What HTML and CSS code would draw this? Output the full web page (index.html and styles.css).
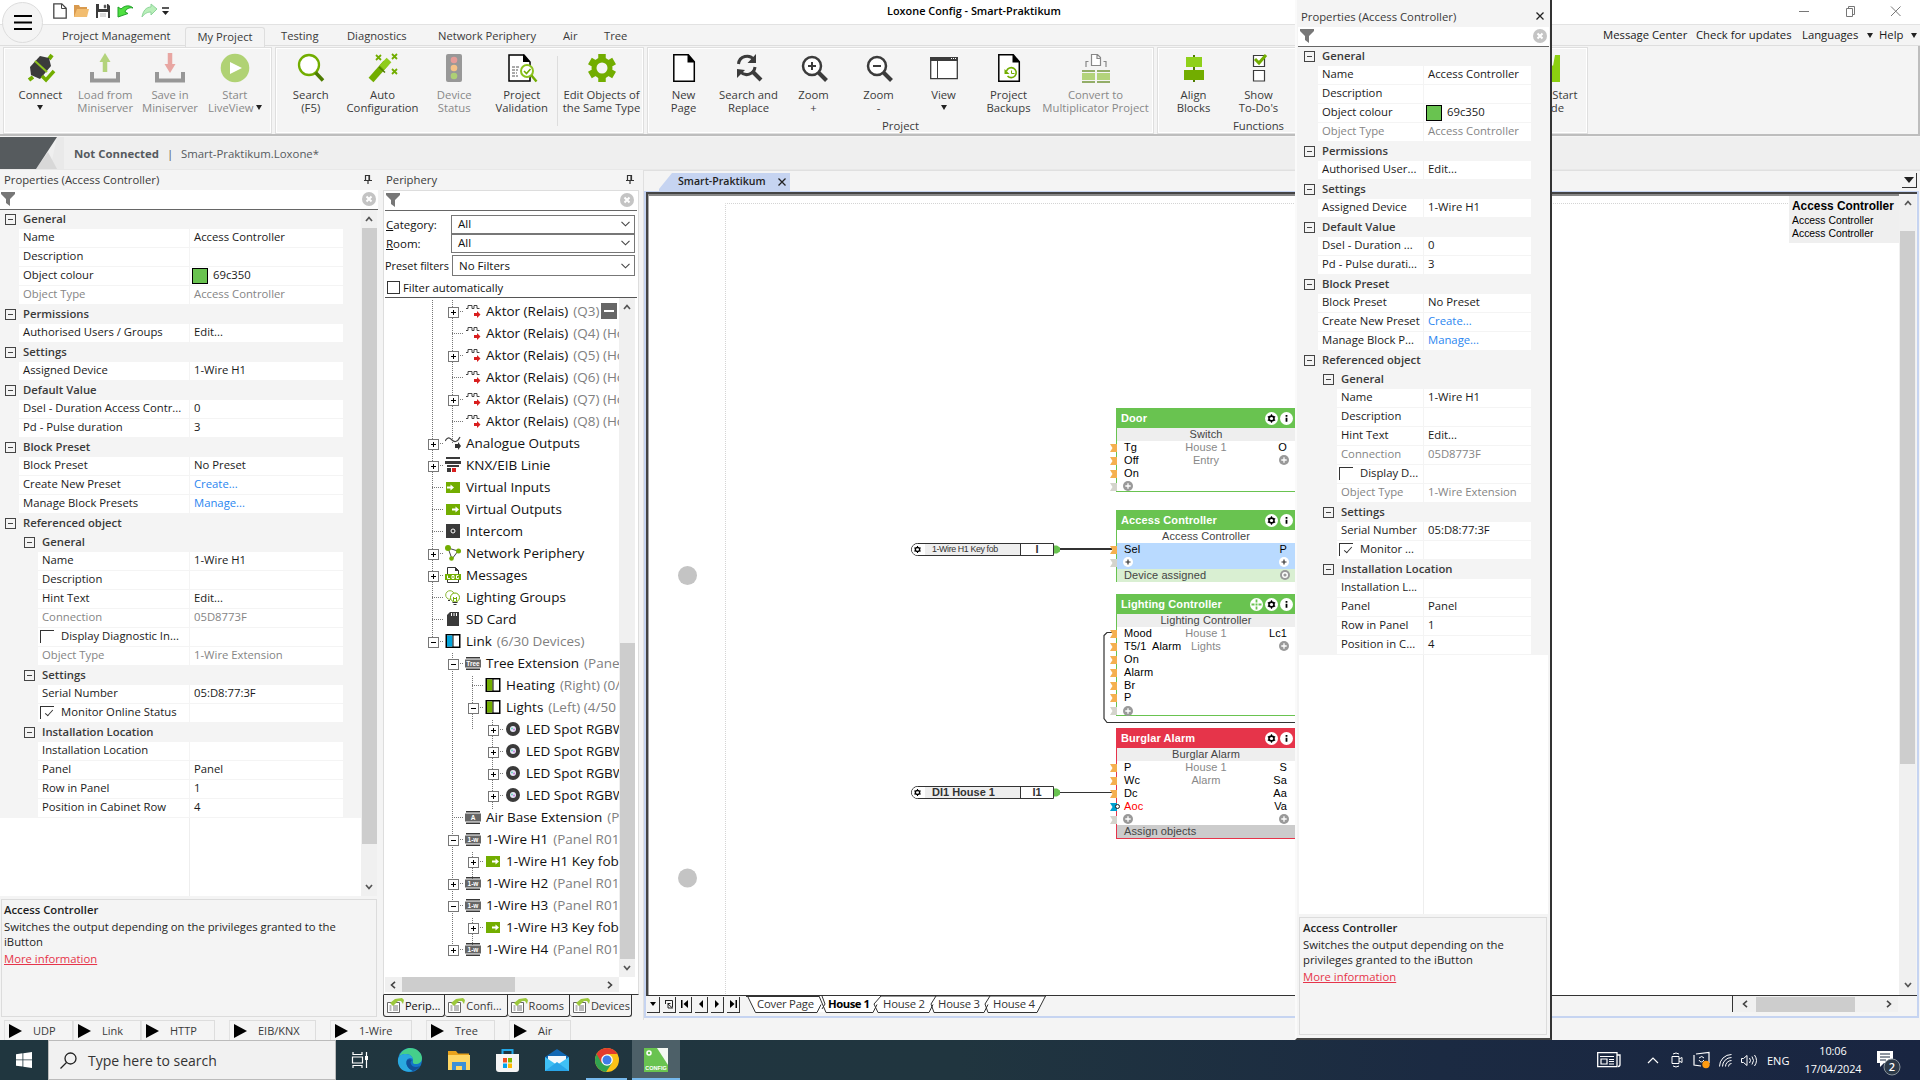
FILE: index.html
```html
<!DOCTYPE html>
<html lang="en">
<head>
<meta charset="utf-8">
<title>Loxone Config - Smart-Praktikum</title>
<link rel="stylesheet" href="styles.css">
</head>
<body>
<svg class="sprite" width="0" height="0">
  <symbol id="funnel" viewBox="0 0 14 14"><path d="M0 0h14v2L9 7v7L5 11V7L0 2z" fill="#777"/></symbol>
  <symbol id="clear" viewBox="0 0 14 14"><circle cx="7" cy="7" r="7" fill="#c4c4c4"/><path d="M4.5 4.5l5 5M9.5 4.5l-5 5" stroke="#fff" stroke-width="2"/></symbol>
  <symbol id="pin" viewBox="0 0 8 9"><path d="M1.5 5V.5h4V5M5 .5V5M0 5.5h8M4 6v3" fill="none" stroke="#333" stroke-width="1.2"/></symbol>
  <symbol id="up" viewBox="0 0 8 6"><path d="M1 5l3-3.5L7 5" fill="none" stroke="#555" stroke-width="1.7"/></symbol>
  <symbol id="down" viewBox="0 0 8 6"><path d="M1 1l3 3.5L7 1" fill="none" stroke="#555" stroke-width="1.7"/></symbol>
  <symbol id="left" viewBox="0 0 6 8"><path d="M5 .8L1.5 4 5 7.2" fill="none" stroke="#444" stroke-width="1.6"/></symbol>
  <symbol id="right" viewBox="0 0 6 8"><path d="M1 .8L4.500 4 1 7.200" fill="none" stroke="#444" stroke-width="1.6"/></symbol>
  <symbol id="chev" viewBox="0 0 9 6"><path d="M.5 .8l4 4 4-4" fill="none" stroke="#444" stroke-width="1.100"/></symbol>
  <symbol id="relay" viewBox="0 0 16 14"><path d="M1 4.500h2V1.500h4v3h2V1.500h3v3h2.500" fill="none" stroke="#444"/><path d="M9 9h3V7l3.500 3.500L12 14v-2H9z" fill="#d91e1e"/></symbol>
  <symbol id="analog" viewBox="0 0 16 14"><path d="M0 5c3-5 5-3 7-1s5 3 8-3" fill="none" stroke="#444" stroke-width="1.200"/><path d="M10 8h3V6l3 4-3 4v-2h-3z" fill="#333"/></symbol>
  <symbol id="knx" viewBox="0 0 16 16"><path d="M1 0h14v2H1zM0 4h16v3H0zM2 8h12v2H2zM2 11h4v4H2z" fill="#3a3a3a"/><path d="M7 11h4v4H7z" fill="#d91e1e"/></symbol>
  <symbol id="vin" viewBox="0 0 14 11"><path d="M0 0h14v11H0z" fill="#72ad00"/><path d="M1 4.500h3.500V2.500l3.500 3-3.500 3v-2H1z" fill="#fff"/></symbol>
  <symbol id="vout" viewBox="0 0 14 11"><path d="M0 0h14v11H0z" fill="#72ad00"/><path d="M6 4.500h3.500V2.500l3.500 3-3.500 3v-2H6z" fill="#fff"/></symbol>
  <symbol id="intercom" viewBox="0 0 14 14"><path d="M0 0h14v14H0z" fill="#3a3a3a"/><circle cx="7" cy="7" r="2" fill="none" stroke="#fff"/></symbol>
  <symbol id="network" viewBox="0 0 16 16"><path d="M3 3l10 3-6 8z" fill="none" stroke="#444"/><circle cx="3" cy="3" r="3" fill="#72ad00"/><circle cx="13.500" cy="6" r="2.500" fill="#72ad00"/><circle cx="6.500" cy="13.500" r="2.300" fill="#72ad00"/></symbol>
  <symbol id="log" viewBox="0 0 16 16"><path d="M2.500 15.500V.5h8l3 3v12z" fill="#fff" stroke="#333"/><path d="M10 0v4h4z" fill="#333"/><path d="M0 7h16v6H0z" fill="#72ad00"/><path d="M2.500 8.500v3h2.500M7 8.500h2v3H7zM13.500 8.500h-2v3h2v-1" fill="none" stroke="#fff"/></symbol>
  <symbol id="bulbs" viewBox="0 0 16 15"><circle cx="5" cy="5" r="4.300" fill="none" stroke="#8db83a"/><circle cx="10" cy="7.500" r="4.500" fill="#fff" stroke="#72ad00"/><path d="M8.500 11V7M11.500 11V7M8.500 8.500h3" stroke="#72ad00"/><path d="M7.500 12.500h5M8.500 14.500h3M3 10.500h2" stroke="#333"/></symbol>
  <symbol id="sd" viewBox="0 0 12 14"><path d="M3 0h9v14H0V3z" fill="#3a3a3a"/><path d="M4.500 1v3M7 1v3M9.500 1v3" stroke="#fff"/></symbol>
  <symbol id="linkbox" viewBox="0 0 15 14"><path d="M.75.75h13.500v12.500H.75z" fill="#fff" stroke="#000" stroke-width="1.500"/><path d="M1.500 1.500H7v11H1.500z" fill="#00a4db"/><path d="M7.500 1v12" stroke="#000"/></symbol>
  <symbol id="treebox" viewBox="0 0 15 14"><path d="M.75.75h13.500v12.500H.75z" fill="#fff" stroke="#000" stroke-width="1.500"/><path d="M1.500 1.500H7v11H1.500z" fill="#72ad00"/><path d="M7.500 1v12" stroke="#000"/></symbol>
  <symbol id="spot" viewBox="0 0 14 14"><circle cx="7" cy="7" r="7" fill="#3a3a3a"/><circle cx="7" cy="7" r="3" fill="#e6e6f4"/><circle cx="6" cy="6.500" r="1" fill="#6ad1c0"/><circle cx="8" cy="7.500" r="1" fill="#c67be0"/></symbol>
  <symbol id="ext" viewBox="0 0 16 13"><path d="M1 0h14v1.500H1zM1 11.500h14V13H1z" fill="#3a3a3a"/><path d="M0 2.500h16v8H0z" fill="#666"/></symbol>
  <symbol id="proptab" viewBox="0 0 17 15"><path d="M.5 4.500h12v10H.5z" fill="#fff" stroke="#666"/><path d="M2.500 8h2M6 8h5M2.500 10h2M6 10h5M2.500 12h2M6 12h5" stroke="#777"/><path d="M3 5l5-4 7-1 2 2-1 4-2-3-3 0-5 5z" fill="#9cc83c"/></symbol>
  <symbol id="gearw" viewBox="0 0 13 13"><circle cx="6.500" cy="6.500" r="6.500" fill="#fff"/><circle cx="6.500" cy="6.500" r="2.500" fill="none" stroke="#000" stroke-width="1.600"/><path d="M6.500 2.300v8.400M2.800 4.400l7.400 4.200M10.200 4.400L2.800 8.600" stroke="#000" stroke-width="1.200"/><circle cx="6.500" cy="6.500" r="1.600" fill="#fff"/></symbol>
  <symbol id="infow" viewBox="0 0 13 13"><circle cx="6.500" cy="6.500" r="6.500" fill="#fff"/><path d="M6.500 3v1.800M6.500 5.800v4" stroke="#000" stroke-width="1.800"/></symbol>
  <symbol id="movew" viewBox="0 0 13 13"><circle cx="6.500" cy="6.500" r="6.500" fill="#fff"/><path d="M6.500 1.500v3M6.500 8.500v3M1.500 6.500h3M8.500 6.500h3M5.500 6.500h2" stroke="#69c350" stroke-width="1.800"/></symbol>
  <symbol id="addg" viewBox="0 0 10 10"><circle cx="5" cy="5" r="5" fill="#999"/><path d="M5 2.300v5.400M2.300 5h5.400" stroke="#fff" stroke-width="1.300"/></symbol>
  <symbol id="addw" viewBox="0 0 10 10"><circle cx="5" cy="5" r="5" fill="#fff"/><path d="M5 2.500v5M2.500 5h5" stroke="#333" stroke-width="1.200"/></symbol>
  <symbol id="port" viewBox="0 0 7 8"><path d="M0 0h7v8H0l2.500-4z"/></symbol>
  <symbol id="play" viewBox="0 0 13 14"><path d="M0 0l13 7-13 7z"/></symbol>
</svg>

<header class="titlebar">
  <div class="quick">
    <svg width="14" height="16" viewBox="0 0 14 16"><path d="M.8.8h8l4.400 4.400v10H.8z" fill="#fff" stroke="#444" stroke-width="1.300"/><path d="M8.500 1v4.500H13" fill="none" stroke="#444"/></svg>
    <svg width="15" height="12" viewBox="0 0 15 12"><path d="M0 0h5l1 2h7v10H0z" fill="#d99a4e"/><path d="M3 4h12l-2 8H0z" fill="#f2bd70"/></svg>
    <svg width="14" height="14" viewBox="0 0 14 14"><path d="M0 0h12l2 2v12H0z" fill="#3b3b3b"/><path d="M3 0h8v5H3zM2 8h10v6H2z" fill="#fff"/><path d="M8 1h2v3H8zM4 10h6M4 12h6" fill="#3b3b3b" stroke="#888" stroke-width=".6"/></svg>
    <svg width="17" height="14" viewBox="0 0 17 14"><path d="M1 3l3 2c4-4 9-4 12-1-4-1-7 1-8 4l3 1.500L1 13z" fill="#4fe040" stroke="#22a02a"/></svg>
    <svg width="17" height="14" viewBox="0 0 17 14"><path d="M16 5L10 0v3C5 3 2 7 1 13c3-4 6-5 9-5v3z" fill="#b9efb9" stroke="#8fd49b"/></svg>
    <svg width="7" height="8" viewBox="0 0 7 8"><path d="M0 1h7" stroke="#222" stroke-width="1.500"/><path d="M0 4h7L3.500 8z" fill="#222"/></svg>
  </div>
  <div class="win-title">Loxone Config - Smart-Praktikum</div>
  <svg class="win-ctl" width="104" height="12" viewBox="0 0 104 12"><path d="M0 6.500h10M47.500 3.500h6v8h-6zM49.500 3.500v-2h6v8h-2M92 1.500l9.500 9.500M101.500 1.500L92 11" fill="none" stroke="#777"/></svg>
</header>

<nav class="tabs">
  <span class="tab t-pm">Project Management</span>
  <span class="tab active">My Project</span>
  <span class="tab t-te">Testing</span>
  <span class="tab t-di">Diagnostics</span>
  <span class="tab t-ne">Network Periphery</span>
  <span class="tab t-ai">Air</span>
  <span class="tab t-tr">Tree</span>
  <div class="tab-right"><span class="mc">Message Center</span><span class="cu">Check for updates</span><span class="la">Languages</span><i class="tri"></i><span class="he">Help</span><i class="tri"></i></div>
</nav>
<div class="menu-orb"><svg width="18" height="16" viewBox="0 0 18 16"><path d="M0 2h18M0 8.500h18M0 15h18" stroke="#000" stroke-width="2"/></svg></div>

<section class="ribbon">
  <div class="group g1">
    <div class="btn"><svg width="30" height="30" viewBox="0 0 30 30"><path d="M27 2l-3 4M4 27l4-3" stroke="#72ad00" stroke-width="4"/><path d="M15 3l9 2 2 8-11 13-9-4-1-8z" fill="#3b3b3b"/><path d="M10 8l12 11" stroke="#8fc320" stroke-width="2"/><path d="M17 23l4 4 8-9" fill="none" stroke="#72ad00" stroke-width="3.500"/></svg><span>Connect</span><i class="tri"></i></div>
    <div class="btn off"><svg width="30" height="30" viewBox="0 0 30 30"><path d="M2 19v8.500h26V19" fill="none" stroke="#979797" stroke-width="4"/><path d="M15 19V8" stroke="#b3d37b" stroke-width="4.500"/><path d="M9.500 9L15 0l5.500 9z" fill="#b3d37b"/></svg><span>Load from</span><span>Miniserver</span></div>
    <div class="btn off"><svg width="30" height="30" viewBox="0 0 30 30"><path d="M2 19v8.500h26V19" fill="none" stroke="#979797" stroke-width="4"/><path d="M15 0v12" stroke="#e8a6a2" stroke-width="4.500"/><path d="M9.500 11l5.500 9 5.500-9z" fill="#e8a6a2"/></svg><span>Save in</span><span>Miniserver</span></div>
    <div class="btn off"><svg width="30" height="30" viewBox="0 0 30 30"><circle cx="15" cy="15" r="14.300" fill="#b0d274"/><path d="M10 9l12 6-12 6z" fill="#fff"/></svg><span>Start</span><span>LiveView<i class="tri"></i></span></div>
  </div>
  <div class="group g2">
    <div class="btn"><svg width="30" height="30" viewBox="0 0 30 30"><circle cx="13" cy="12" r="10" fill="#fff" stroke="#72ad00" stroke-width="2.300"/><path d="M19.500 19.500l7.500 8" stroke="#4e7c00" stroke-width="3.500"/></svg><span>Search</span><span>(F5)</span></div>
    <div class="btn b72"><svg width="30" height="30" viewBox="0 0 30 30"><path d="M3 27L18 10" stroke="#72ad00" stroke-width="6.500"/><path d="M14 14.500L21 7" stroke="#8fcc1c" stroke-width="6.500"/><path d="M11 14l6 5.500" stroke="#4e7c00" stroke-width="1.500"/><path d="M8 2l5 5M13 2L8 7M24 1l5 5M29 1l-5 5M24 16l5 5M29 16l-5 5" stroke="#72ad00" stroke-width="1.800"/></svg><span>Auto</span><span>Configuration</span></div>
    <div class="btn off"><svg width="30" height="30" viewBox="0 0 30 30"><rect x="7" y="1" width="16" height="28" rx="2" fill="#989898"/><circle cx="15" cy="7" r="3.300" fill="#e59c98"/><circle cx="15" cy="15" r="3.300" fill="#f5c288"/><circle cx="15" cy="23" r="3.300" fill="#aed075"/></svg><span>Device</span><span>Status</span></div>
    <div class="btn"><svg width="30" height="30" viewBox="0 0 30 30"><path d="M2 2h15l6 7v19H2z" fill="#fff" stroke="#000" stroke-width="1.500"/><path d="M16 1v8h7z"/><path d="M5 14h8M5 17h6M5 20h5M5 23h6" stroke="#555" stroke-dasharray="3 1"/><circle cx="20" cy="18" r="6" fill="#fff" stroke="#8cc21e" stroke-width="2"/><path d="M17 18l2.500 2.500 4-4.500" fill="none" stroke="#72ad00" stroke-width="1.600"/><path d="M24.500 22.500l5 6" stroke="#72ad00" stroke-width="2.500"/></svg><span>Project</span><span>Validation</span></div>
    <i class="vsep"></i>
    <div class="btn b80"><svg width="30" height="30" viewBox="0 0 30 30"><path d="M15 1v28M2.900 8l24.200 14M27.100 8L2.900 22" stroke="#72ad00" stroke-width="7.500"/><circle cx="15" cy="15" r="10.500" fill="#72ad00"/><circle cx="15" cy="15" r="5.500" fill="#f4f4f4"/></svg><span>Edit Objects of</span><span>the Same Type</span></div>
  </div>
  <div class="group g3">
    <div class="btn"><svg width="30" height="30" viewBox="0 0 30 30"><path d="M4.800 1.800h14.500l6 7v19.500H4.800z" fill="#fff" stroke="#000" stroke-width="1.500"/><path d="M18.500 1v8.500H26z"/></svg><span>New</span><span>Page</span></div>
    <div class="btn"><svg width="30" height="30" viewBox="0 0 30 30"><path d="M4.500 11A8.500 8.500 0 0 1 20 7M21 14a8.500 8.500 0 0 1-14.500 5" fill="none" stroke="#3b3b3b" stroke-width="3"/><path d="M22 1v9h-8.500zM3 25v-9l8 1z" fill="#3b3b3b"/><path d="M18 18l9 9" stroke="#3b3b3b" stroke-width="4"/></svg><span>Search and</span><span>Replace</span></div>
    <div class="btn"><svg width="30" height="30" viewBox="0 0 30 30"><circle cx="13" cy="13" r="9" fill="#fff" stroke="#3b3b3b" stroke-width="2.500"/><path d="M19.500 19.500l8 8" stroke="#3b3b3b" stroke-width="4"/><path d="M13 9v8M9 13h8" stroke="#3b3b3b" stroke-width="2"/></svg><span>Zoom</span><span>+</span></div>
    <div class="btn"><svg width="30" height="30" viewBox="0 0 30 30"><circle cx="13" cy="13" r="9" fill="#fff" stroke="#3b3b3b" stroke-width="2.500"/><path d="M19.500 19.500l8 8" stroke="#3b3b3b" stroke-width="4"/><path d="M9 13h8" stroke="#3b3b3b" stroke-width="2"/></svg><span>Zoom</span><span>-</span></div>
    <div class="btn"><svg width="30" height="30" viewBox="0 0 30 30"><path d="M1.700 4.700h26.600v21H1.700z" fill="#fff" stroke="#3b3b3b" stroke-width="1.300"/><path d="M1 4h28v4H1z" fill="#3b3b3b"/><path d="M8.500 8v18" stroke="#3b3b3b"/><path d="M22 5.500h6" stroke="#fff" stroke-dasharray="1 1"/></svg><span>View</span><i class="tri"></i></div>
    <div class="btn"><svg width="30" height="30" viewBox="0 0 30 30"><path d="M4.800 1.800h14.500l6 7v19.500H4.800z" fill="#fff" stroke="#000" stroke-width="1.500"/><path d="M18.500 1v8.500H26z"/><path d="M12.500 18a5 5 0 1 1 1 5" fill="none" stroke="#72ad00" stroke-width="1.600"/><path d="M10.500 16v5h5z" fill="#72ad00"/><path d="M17.500 17.500v3h3" fill="none" stroke="#72ad00"/></svg><span>Project</span><span>Backups</span></div>
    <div class="btn b108 off"><svg width="30" height="30" viewBox="0 0 30 30"><path d="M10.500 1.500h6l3 3v8h-9zM16 1.500v4h4" fill="#fff" stroke="#888" stroke-width="1.200"/><path d="M5 14V8.500h2.500M25 14V8.500h-2.500" fill="none" stroke="#888" stroke-width="1.200"/><path d="M1 17h13v2H1zM16 17h13v2H16zM1 28h13v2H1zM16 28h13v2H16z" fill="#93ad68"/><path d="M1 20h13v7H1zM16 20h13v7H16z" fill="#b3d37b"/></svg><span>Convert to</span><span>Multiplicator Project</span></div>
    <div class="caption">Project</div>
  </div>
  <div class="group g4">
    <div class="btn"><svg width="30" height="30" viewBox="0 0 30 30"><path d="M15 2v27" stroke="#4e7c00" stroke-width="2"/><path d="M7 4h16v10H7z" fill="#8fd01a"/><path d="M5 17h20v10H5z" fill="#72ad00"/></svg><span>Align</span><span>Blocks</span></div>
    <div class="btn"><svg width="30" height="30" viewBox="0 0 30 30"><path d="M9.500 2.500h11v11h-11zM9.500 17.500h11v10.500h-11z" fill="#fff" stroke="#3b3b3b" stroke-width="1.200"/><path d="M11 6l4 4 7-8" fill="none" stroke="#72ad00" stroke-width="3"/></svg><span>Show</span><span>To-Do's</span></div>
    <div class="btn quickstart"><svg width="30" height="30" viewBox="0 0 30 30"><path d="M6 12h6l4-2 3 3 2-11h5v27H6z" fill="#8cd010"/></svg><span>Quick Start</span><span>Guide</span></div>
    <div class="caption cap4">Functions</div>
  </div>
</section>

<div class="conn">
  <svg width="64" height="32" viewBox="0 0 64 32"><path d="M57 0h7v32H50z" fill="#e9e9e9"/><path d="M48 15l9 17H36z" fill="#d8d8d8"/><path d="M0 0h57L36 32H0z" fill="#565b5e"/></svg>
  <b>Not Connected</b><span class="bar">|</span><span>Smart-Praktikum.Loxone*</span>
</div>

<main class="work">
  <aside class="props docked">
    <div class="cap"><span>Properties (Access Controller)</span><svg width="8" height="9"><use href="#pin"/></svg></div>
    <div class="filter"><svg width="14" height="14"><use href="#funnel"/></svg><svg width="14" height="14"><use href="#clear"/></svg></div>
    <div class="sheet">
      <div class="rows">
        <div class="ph">General</div>
        <div class="pr"><span>Name</span><span>Access Controller</span></div>
        <div class="pr"><span>Description</span><span></span></div>
        <div class="pr"><span>Object colour</span><span><i class="swatch"></i>69c350</span></div>
        <div class="pr dim"><span>Object Type</span><span>Access Controller</span></div>
        <div class="ph">Permissions</div>
        <div class="pr"><span>Authorised Users / Groups</span><span>Edit...</span></div>
        <div class="ph">Settings</div>
        <div class="pr"><span>Assigned Device</span><span>1-Wire H1</span></div>
        <div class="ph">Default Value</div>
        <div class="pr"><span>Dsel - Duration Access Contr...</span><span>0</span></div>
        <div class="pr"><span>Pd - Pulse duration</span><span>3</span></div>
        <div class="ph">Block Preset</div>
        <div class="pr"><span>Block Preset</span><span>No Preset</span></div>
        <div class="pr link"><span>Create New Preset</span><span>Create...</span></div>
        <div class="pr link"><span>Manage Block Presets</span><span>Manage...</span></div>
        <div class="ph">Referenced object</div>
        <div class="nest">
          <div class="ph">General</div>
          <div class="pr"><span>Name</span><span>1-Wire H1</span></div>
          <div class="pr"><span>Description</span><span></span></div>
          <div class="pr"><span>Hint Text</span><span>Edit...</span></div>
          <div class="pr dim"><span>Connection</span><span>05D8773F</span></div>
          <div class="pr chk"><span><i class="box"></i>Display Diagnostic In...</span><span></span></div>
          <div class="pr dim"><span>Object Type</span><span>1-Wire Extension</span></div>
          <div class="ph">Settings</div>
          <div class="pr"><span>Serial Number</span><span>05:D8:77:3F</span></div>
          <div class="pr chk"><span><i class="box on"></i>Monitor Online Status</span><span></span></div>
          <div class="ph">Installation Location</div>
          <div class="pr"><span>Installation Location</span><span></span></div>
          <div class="pr"><span>Panel</span><span>Panel</span></div>
          <div class="pr"><span>Row in Panel</span><span>1</span></div>
          <div class="pr"><span>Position in Cabinet Row</span><span>4</span></div>
        </div>
        <div class="blank"></div>
      </div>
      <div class="vscroll"><svg width="8" height="6"><use href="#up"/></svg><i class="thumb"></i><svg width="8" height="6"><use href="#down"/></svg></div>
    </div>
    <div class="desc"><b>Access Controller</b><p>Switches the output depending on the privileges granted to the iButton</p><a>More information</a></div>
  </aside>

  <aside class="peri">
    <div class="cap"><span>Periphery</span><svg width="8" height="9"><use href="#pin"/></svg></div>
    <div class="peri-box">
      <div class="filter"><svg width="14" height="14"><use href="#funnel"/></svg><svg width="14" height="14"><use href="#clear"/></svg></div>
      <div class="form">
        <div class="fr"><label><u>C</u>ategory:</label><div class="sel">All<svg width="9" height="6"><use href="#chev"/></svg></div></div>
        <div class="fr"><label><u>R</u>oom:</label><div class="sel">All<svg width="9" height="6"><use href="#chev"/></svg></div></div>
        <div class="fr preset"><label>Preset filters</label><div class="sel">No Filters<svg width="9" height="6"><use href="#chev"/></svg></div></div>
        <div class="fr auto"><i class="cb"></i>Filter automatically</div>
      </div>
      <div class="tree-wrap">
        <div class="tree">
          <svg class="lines" width="120" height="660"><path d="M47.500 0v344M67.500 0v144M67.500 353v300M87.500 376v54M87.500 552v28M87.500 618v28M107.500 420v90" /></svg>
          <div class="n l2 p"><svg width="16" height="14"><use href="#relay"/></svg>Aktor (Relais)<em>(Q3)</em><i class="minus"></i></div>
          <div class="n l2"><svg width="16" height="14"><use href="#relay"/></svg>Aktor (Relais)<em>(Q4) (House 1)</em></div>
          <div class="n l2 p"><svg width="16" height="14"><use href="#relay"/></svg>Aktor (Relais)<em>(Q5) (House 1)</em></div>
          <div class="n l2"><svg width="16" height="14"><use href="#relay"/></svg>Aktor (Relais)<em>(Q6) (House 1)</em></div>
          <div class="n l2 p"><svg width="16" height="14"><use href="#relay"/></svg>Aktor (Relais)<em>(Q7) (House 1)</em></div>
          <div class="n l2"><svg width="16" height="14"><use href="#relay"/></svg>Aktor (Relais)<em>(Q8) (House 1)</em></div>
          <div class="n l1 p"><svg width="16" height="14"><use href="#analog"/></svg>Analogue Outputs</div>
          <div class="n l1 p"><svg width="16" height="16"><use href="#knx"/></svg>KNX/EIB Linie</div>
          <div class="n l1"><svg width="16" height="11"><use href="#vin"/></svg>Virtual Inputs</div>
          <div class="n l1"><svg width="16" height="11"><use href="#vout"/></svg>Virtual Outputs</div>
          <div class="n l1"><svg width="16" height="14"><use href="#intercom"/></svg>Intercom</div>
          <div class="n l1 p"><svg width="16" height="16"><use href="#network"/></svg>Network Periphery</div>
          <div class="n l1 p"><svg width="16" height="16"><use href="#log"/></svg>Messages</div>
          <div class="n l1"><svg width="16" height="15"><use href="#bulbs"/></svg>Lighting Groups</div>
          <div class="n l1"><svg width="16" height="14"><use href="#sd"/></svg>SD Card</div>
          <div class="n l1 m"><svg width="16" height="14"><use href="#linkbox"/></svg>Link<em>(6/30 Devices)</em></div>
          <div class="n l2 m"><svg width="16" height="13"><use href="#ext"/><text x="8" y="9">Tree</text></svg>Tree Extension<em>(Panel R01)</em></div>
          <div class="n l3"><svg width="16" height="14"><use href="#treebox"/></svg>Heating<em>(Right) (0/50)</em></div>
          <div class="n l3 m"><svg width="16" height="14"><use href="#treebox"/></svg>Lights<em>(Left) (4/50</em></div>
          <div class="n l4 p"><svg width="16" height="14"><use href="#spot"/></svg>LED Spot RGBW</div>
          <div class="n l4 p"><svg width="16" height="14"><use href="#spot"/></svg>LED Spot RGBW</div>
          <div class="n l4 p"><svg width="16" height="14"><use href="#spot"/></svg>LED Spot RGBW</div>
          <div class="n l4 p"><svg width="16" height="14"><use href="#spot"/></svg>LED Spot RGBW</div>
          <div class="n l2"><svg width="16" height="13"><use href="#ext"/><text x="8" y="9">A</text></svg>Air Base Extension<em>(Panel)</em></div>
          <div class="n l2 m"><svg width="16" height="13"><use href="#ext"/><text x="8" y="9">1-w</text></svg>1-Wire H1<em>(Panel R01</em></div>
          <div class="n l3 p"><svg width="16" height="11"><use href="#vout"/></svg>1-Wire H1 Key fob</div>
          <div class="n l2 p"><svg width="16" height="13"><use href="#ext"/><text x="8" y="9">1-w</text></svg>1-Wire H2<em>(Panel R01</em></div>
          <div class="n l2 m"><svg width="16" height="13"><use href="#ext"/><text x="8" y="9">1-w</text></svg>1-Wire H3<em>(Panel R01</em></div>
          <div class="n l3 p"><svg width="16" height="11"><use href="#vout"/></svg>1-Wire H3 Key fob</div>
          <div class="n l2 p"><svg width="16" height="13"><use href="#ext"/><text x="8" y="9">1-w</text></svg>1-Wire H4<em>(Panel R01</em></div>
        </div>
        <div class="vscroll tv"><svg width="8" height="6"><use href="#up"/></svg><i class="thumb"></i><svg width="8" height="6"><use href="#down"/></svg></div>
      </div>
      <div class="hscroll"><svg width="6" height="8"><use href="#left"/></svg><i class="thumb"></i><svg width="6" height="8"><use href="#right"/></svg></div>
    </div>
    <div class="ptabs">
      <span class="on"><svg width="17" height="15"><use href="#proptab"/></svg>Perip...</span>
      <span><svg width="17" height="15"><use href="#proptab"/></svg>Confi...</span>
      <span><svg width="17" height="15"><use href="#proptab"/></svg>Rooms</span>
      <span><svg width="17" height="15"><use href="#proptab"/></svg>Devices</span>
    </div>
  </aside>

  <section class="doc">
    <div class="doctabs">
      <div class="doctab">Smart-Praktikum<svg width="8" height="8" viewBox="0 0 8 8"><path d="M.5.5l7 7M7.500.5l-7 7" stroke="#222" stroke-width="1.300"/></svg></div>
      <div class="dd"><i class="tri big"></i></div>
    </div>
    <div class="frame">
      <div class="canvas-row">
        <div class="canvas">
          <svg class="wires" width="1250" height="798">
            <path d="M76.500 798V7.500h1180" fill="none" stroke="#d4d4d4" stroke-dasharray="1 1"/>
            <circle cx="38.500" cy="379.500" r="9.500" fill="#c4c4c4"/><circle cx="38.500" cy="682" r="9.500" fill="#c4c4c4"/>
            <path d="M411 353h52" stroke="#333" stroke-width="2"/>
            <path d="M411 596.500h53" stroke="#333"/>
            <path d="M464 436.500h-6l-3 3v83l3 4h190" fill="none" stroke="#333" stroke-width="1.200"/>
            <g fill="#69c350"><path d="M405 349.500h3l3 2v4l-3 2h-3zM405 592.500h3l3 2v4l-3 2h-3z"/></g>
          </svg>
          <div class="pill p1"><svg width="13" height="11"><use href="#gearw" width="11" height="11"/></svg><span class="pn">1-Wire H1 Key fob</span><span class="pv">I</span></div>
          <div class="pill p2"><svg width="13" height="11"><use href="#gearw" width="11" height="11"/></svg><span class="pn big">DI1 House 1</span><span class="pv">I1</span></div>

          <div class="node door">
            <div class="nh">Door<span><svg width="13" height="13"><use href="#gearw"/></svg><svg width="13" height="13"><use href="#infow"/></svg></span></div>
            <div class="ns">Switch</div>
            <div class="np"><svg class="port"><use href="#port"/></svg><span>Tg</span><em>House 1</em><span>O</span></div>
            <div class="np"><svg class="port"><use href="#port"/></svg><span>Off</span><em>Entry</em><span><svg width="10" height="10"><use href="#addg"/></svg></span></div>
            <div class="np"><svg class="port"><use href="#port"/></svg><span>On</span></div>
            <div class="np"><svg class="port idle"><use href="#port"/></svg><span><svg width="10" height="10"><use href="#addg"/></svg></span></div>
          </div>
          <div class="node access">
            <div class="nh">Access Controller<span><svg width="13" height="13"><use href="#gearw"/></svg><svg width="13" height="13"><use href="#infow"/></svg></span></div>
            <div class="ns">Access Controller</div>
            <div class="np sel-row"><svg class="port"><use href="#port"/></svg><span>Sel</span><span class="r">P</span></div>
            <div class="np sel-row"><svg class="port idle"><use href="#port"/></svg><span><svg width="10" height="10"><use href="#addw"/></svg></span><span class="r"><svg width="10" height="10"><use href="#addw"/></svg></span></div>
            <div class="nf ok">Device assigned<svg width="10" height="10" viewBox="0 0 10 10"><circle cx="5" cy="5" r="5" fill="#999"/><circle cx="5" cy="5" r="2.300" fill="#999" stroke="#fff" stroke-width="1.400"/></svg></div>
          </div>
          <div class="node light">
            <div class="nh">Lighting Controller<span><svg width="13" height="13"><use href="#movew"/></svg><svg width="13" height="13"><use href="#gearw"/></svg><svg width="13" height="13"><use href="#infow"/></svg></span></div>
            <div class="ns">Lighting Controller</div>
            <div class="np"><svg class="port"><use href="#port"/></svg><span>Mood</span><em>House 1</em><span>Lc1</span></div>
            <div class="np"><svg class="port"><use href="#port"/></svg><span>T5/1&nbsp; Alarm</span><em>Lights</em><span><svg width="10" height="10"><use href="#addg"/></svg></span></div>
            <div class="np"><svg class="port"><use href="#port"/></svg><span>On</span></div>
            <div class="np"><svg class="port"><use href="#port"/></svg><span>Alarm</span></div>
            <div class="np"><svg class="port"><use href="#port"/></svg><span>Br</span></div>
            <div class="np"><svg class="port"><use href="#port"/></svg><span>P</span></div>
            <div class="np"><svg class="port idle"><use href="#port"/></svg><span><svg width="10" height="10"><use href="#addg"/></svg></span></div>
          </div>
          <div class="node burglar">
            <div class="nh">Burglar Alarm<span><svg width="13" height="13"><use href="#gearw"/></svg><svg width="13" height="13"><use href="#infow"/></svg></span></div>
            <div class="ns">Burglar Alarm</div>
            <div class="np"><svg class="port"><use href="#port"/></svg><span>P</span><em>House 1</em><span>S</span></div>
            <div class="np"><svg class="port"><use href="#port"/></svg><span>Wc</span><em>Alarm</em><span>Sa</span></div>
            <div class="np"><svg class="port"><use href="#port"/></svg><span>Dc</span><span class="r">Aa</span></div>
            <div class="np aoc"><svg class="port"><use href="#port"/></svg><i class="ring"></i><span>Aoc</span><span class="r">Va</span></div>
            <div class="np"><svg class="port idle"><use href="#port"/></svg><span><svg width="10" height="10"><use href="#addg"/></svg></span><span class="r"><svg width="10" height="10"><use href="#addg"/></svg></span></div>
            <div class="nf">Assign objects</div>
          </div>
          <div class="hint"><b>Access Controller</b><span>Access Controller</span><span>Access Controller</span></div>
        </div>
        <div class="vscroll cv"><svg width="8" height="6"><use href="#up"/></svg><i class="thumb"></i><svg width="8" height="6"><use href="#down"/></svg></div>
      </div>
      <div class="sheetbar">
        <div class="nav"><i><svg viewBox="0 0 12 14"><path d="M3 5h6L6 9z"/></svg></i><i><svg viewBox="0 0 12 14"><path d="M2.500 3.500h7v7M2.500 3v4M4.500 6.500h3M5 7v4h4.500z" fill="none" stroke="#222"/></svg></i><i><svg viewBox="0 0 12 14"><path d="M2 3h1.500v8H2zM9 3v8L4.500 7z"/></svg></i><i><svg viewBox="0 0 12 14"><path d="M8 3v8L4 7z"/></svg></i><i><svg viewBox="0 0 12 14"><path d="M4 3v8l4-4z"/></svg></i><i><svg viewBox="0 0 12 14"><path d="M8.500 3H10v8H8.500zM3 3v8l4.500-4z"/></svg></i></div>
        <svg class="sheets" width="302" height="17">
          <path d="M1 0h298l-8 16H10z" fill="#fff"/>
          <path d="M1.500 0l8 16.500H71l4-8M73 0l7 16.500h47l4-8M135 0l-7 8 4 8.500h51l4-8M190 0l-5 8 3 8.500h50l4-8M244 0l-5 8 3 8.500h49L299.500 0M76 0l3 8-3 5M134 0h166M0 .5h73" fill="none" stroke="#333"/>
          <g><text x="11" y="11.500" textLength="57">Cover Page</text><text class="b" x="82" y="11.500" textLength="42">House 1</text><text x="137" y="11.500" textLength="42">House 2</text><text x="192" y="11.500" textLength="42">House 3</text><text x="247" y="11.500" textLength="42">House 4</text></g>
        </svg>
        <div class="hscroll ch"><svg width="6" height="8"><use href="#left"/></svg><i class="thumb"></i><svg width="6" height="8"><use href="#right"/></svg></div>
      </div>
    </div>
  </section>
</main>

<div class="tools">
  <span class="w70"><svg width="13" height="14"><use href="#play"/></svg>UDP</span><span class="w69"><svg width="13" height="14"><use href="#play"/></svg>Link</span><span class="w73"><svg width="13" height="14"><use href="#play"/></svg>HTTP</span><span class="w87 gap"><svg width="13" height="14"><use href="#play"/></svg>EIB/KNX</span><span class="w82 gap"><svg width="13" height="14"><use href="#play"/></svg>1-Wire</span><span class="w70 gap"><svg width="13" height="14"><use href="#play"/></svg>Tree</span><span class="w62 gap"><svg width="13" height="14"><use href="#play"/></svg>Air</span>
</div>

<footer class="taskbar">
  <div class="start"><svg width="16" height="16" viewBox="0 0 16 16"><path d="M0 2.200l6.500-.9v6.200H0zM7.300 1.200L16 0v7.500H7.300zM0 8.300h6.500v6.300L0 13.700zM7.300 8.300H16V16l-8.700-1.200z" fill="#fff"/></svg></div>
  <div class="search"><svg width="17" height="17" viewBox="0 0 17 17"><circle cx="10.500" cy="6.500" r="5.500" fill="none" stroke="#222" stroke-width="1.300"/><path d="M6.500 10.500l-6 6" stroke="#222" stroke-width="1.300"/></svg>Type here to search</div>
  <div class="apps">
    <div class="app"><svg width="17" height="16" viewBox="0 0 17 16"><path d="M1 0v2.500h9V0M1 16v-2.500h9V16M.5 5h10v6H.5zM14.500 0v16" fill="none" stroke="#fff" stroke-width="1.200"/><path d="M13 4h3v4h-3z" fill="#fff"/></svg></div>
    <div class="app"><svg width="24" height="24" viewBox="0 0 24 24"><circle cx="12" cy="12" r="12" fill="#1375c9"/><path d="M1 9C3 2 9 0 12 0c7 0 12 5 12 10 0 4-3 6-6 6-4 0-3-2-3-4 0-3-3-6-7-6-3 0-6 1-7 3z" fill="#45cf8b"/><path d="M1 9c2-3 5-3 7-3 4 0 7 3 7 6 0-2-4-3-6 0-2 4 1 9 6 11C4 26-1 18 0 11z" fill="#2aa9df"/><path d="M9 12c-2 4 1 9 6 11 3-1 6-3 7-5-4 2-8 1-9-2-1-2 0-3 1-4-2-1-4-1-5 0z" fill="#124f97"/></svg></div>
    <div class="app"><svg width="22" height="19" viewBox="0 0 22 19"><path d="M0 0h8l2 2.500h11V18H0z" fill="#e8a31c"/><path d="M0 4h22v15H0z" fill="#fdd664"/><path d="M4 19v-8h14v8h-4v-4H8v4z" fill="#3c8fd6"/></svg></div>
    <div class="app"><svg width="23" height="23" viewBox="0 0 23 23"><path d="M6.500 7V1h10v6" fill="none" stroke="#22a8e8" stroke-width="2"/><path d="M0 5h23v15q0 3-3 3H3q-3 0-3-3z" fill="#f5f5f5"/><path d="M7 9h4v4.500H7z" fill="#f05022"/><path d="M12 9h4v4.500h-4z" fill="#7fba00"/><path d="M7 14.500h4V19H7z" fill="#00a4ef"/><path d="M12 14.500h4V19h-4z" fill="#ffb900"/></svg></div>
    <div class="app"><svg width="24" height="22" viewBox="0 0 24 22"><path d="M0 8l12-8 12 8v14H0z" fill="#1168b4"/><path d="M3 7h18v8H3z" fill="#f3f8fc"/><path d="M0 8l12 8 12-8v14H0z" fill="#3fc0f5"/><path d="M0 22l12-9 12 9z" fill="#29a5e8"/></svg></div>
    <div class="app run"><svg width="24" height="24" viewBox="0 0 24 24"><circle cx="12" cy="12" r="12" fill="#fbc116"/><path d="M1.600 6A12 12 0 0 0 11 24l6-9-5-3z" fill="#31a350"/><path d="M12 6h10.400A12 12 0 0 0 1.600 6l5 9z" fill="#e33b2e"/><circle cx="12" cy="12" r="5.800" fill="#fff"/><circle cx="12" cy="12" r="4.500" fill="#3f7de8"/></svg></div>
    <div class="app run cur"><svg width="24" height="24" viewBox="0 0 24 24"><path d="M0 0h24v24H0z" fill="#69c350"/><path d="M13 0h11v17z" fill="#f4f8f3"/><circle cx="5" cy="5" r="2" fill="none" stroke="#fff" stroke-width="1.500"/><text x="12" y="22" class="cfg">CONFIG</text></svg></div>
  </div>
  <div class="tray">
    <svg width="24" height="16" viewBox="0 0 24 16"><path d="M.7.7H20v14H.7zM20 3h3v9.500q0 2-2 2" fill="none" stroke="#fff" stroke-width="1.300"/><path d="M4 7h6v5H4zM3 4.500h14M12 7.500h5M12 9.500h5M12 12h5" fill="none" stroke="#fff" stroke-width="1.200"/></svg>
    <svg class="t2" width="12" height="7" viewBox="0 0 12 7"><path d="M1 6l5-5 5 5" fill="none" stroke="#fff" stroke-width="1.200"/></svg>
    <svg class="t3" width="12" height="16" viewBox="0 0 12 16"><path d="M1 4.500h7v7H1zM8 7l3-1.500v5L8 9M2 2q3-2 6 0M2 14q3 2 6 0" fill="none" stroke="#fff"/></svg>
    <svg class="t4" width="17" height="17" viewBox="0 0 17 17"><path d="M3 2l13-1.500V11M1 3v10l7 1" fill="none" stroke="#fff" stroke-width="1.200"/><path d="M6 6q3-3 5 0M11 8q-3 4-5 0" fill="none" stroke="#fff"/><circle cx="13" cy="12.500" r="3.700" fill="#ff9c12"/></svg>
    <svg class="t5" width="13" height="13" viewBox="0 0 13 13"><path d="M.5 12.500a12 12 0 0 1 12-12M3.500 12.500a9 9 0 0 1 9-9M6.500 12.500a6 6 0 0 1 6-6M9.500 12.500a3 3 0 0 1 3-3" fill="none" stroke="#fff"/></svg>
    <svg class="t6" width="17" height="13" viewBox="0 0 17 13"><path d="M.5 4.500h2l3.500-3v10l-3.500-3h-2zM8.500 4q2 2.500 0 5M11 2.500q3 4 0 8M13.500 1q4 5.500 0 11" fill="none" stroke="#fff"/></svg>
    <span class="lang">ENG</span>
    <div class="clock"><span>10:06</span><span>17/04/2024</span></div>
    <svg class="t7" width="24" height="25" viewBox="0 0 24 25"><path d="M0 0h16v12H7l-4 4v-4H0z" fill="#fff"/><path d="M3 3h10M3 6h10M3 9h6" stroke="#1b2a40"/><circle cx="15" cy="16" r="8" fill="#2d3a48" stroke="#8a949c"/><text x="15" y="20" class="cnt">2</text></svg>
  </div>
</footer>

<aside class="props float">
  <div class="cap"><span>Properties (Access Controller)</span><svg width="8" height="8" viewBox="0 0 8 8"><path d="M.5.5l7 7M7.500.5l-7 7" stroke="#222" stroke-width="1.300"/></svg></div>
  <div class="filter"><svg width="14" height="14"><use href="#funnel"/></svg><svg width="14" height="14"><use href="#clear"/></svg></div>
  <div class="sheet">
    <div class="rows">
      <div class="ph">General</div>
      <div class="pr"><span>Name</span><span>Access Controller</span></div>
      <div class="pr"><span>Description</span><span></span></div>
      <div class="pr"><span>Object colour</span><span><i class="swatch"></i>69c350</span></div>
      <div class="pr dim"><span>Object Type</span><span>Access Controller</span></div>
      <div class="ph">Permissions</div>
      <div class="pr"><span>Authorised User...</span><span>Edit...</span></div>
      <div class="ph">Settings</div>
      <div class="pr"><span>Assigned Device</span><span>1-Wire H1</span></div>
      <div class="ph">Default Value</div>
      <div class="pr"><span>Dsel - Duration ...</span><span>0</span></div>
      <div class="pr"><span>Pd - Pulse durati...</span><span>3</span></div>
      <div class="ph">Block Preset</div>
      <div class="pr"><span>Block Preset</span><span>No Preset</span></div>
      <div class="pr link"><span>Create New Preset</span><span>Create...</span></div>
      <div class="pr link"><span>Manage Block P...</span><span>Manage...</span></div>
      <div class="ph">Referenced object</div>
      <div class="nest">
        <div class="ph">General</div>
        <div class="pr"><span>Name</span><span>1-Wire H1</span></div>
        <div class="pr"><span>Description</span><span></span></div>
        <div class="pr"><span>Hint Text</span><span>Edit...</span></div>
        <div class="pr dim"><span>Connection</span><span>05D8773F</span></div>
        <div class="pr chk"><span><i class="box"></i>Display D...</span><span></span></div>
        <div class="pr dim"><span>Object Type</span><span>1-Wire Extension</span></div>
        <div class="ph">Settings</div>
        <div class="pr"><span>Serial Number</span><span>05:D8:77:3F</span></div>
        <div class="pr chk"><span><i class="box on"></i>Monitor ...</span><span></span></div>
        <div class="ph">Installation Location</div>
        <div class="pr"><span>Installation L...</span><span></span></div>
        <div class="pr"><span>Panel</span><span>Panel</span></div>
        <div class="pr"><span>Row in Panel</span><span>1</span></div>
        <div class="pr"><span>Position in C...</span><span>4</span></div>
      </div>
      <div class="blank"></div>
    </div>
  </div>
  <div class="desc"><b>Access Controller</b><p>Switches the output depending on the privileges granted to the iButton</p><a>More information</a></div>
</aside>
</body>
</html>
```

FILE: styles.css
```css
* { box-sizing: border-box; }
html, body { height: 100%; }
body {
  margin: 0;
  width: 1920px;
  height: 1080px;
  overflow: hidden;
  position: relative;
  display: grid;
  grid-template-rows: 24px 22px 91px 33px 850px 20px 40px;
  background: #f4f4f4;
  color: #1e1e1e;
  font: 11.3px/13px "Open Sans", "Noto Sans", sans-serif;
  white-space: nowrap;
}
svg { display: block; flex: none; overflow: visible; }
.sprite { position: absolute; }
i, em { font-style: normal; }
.tri { display: inline-block; border: 3.5px solid transparent; border-top: 5px solid #222; border-bottom: 0; }
.tri.big { border-width: 5px; border-top-width: 6px; border-bottom: 0; }

/* title bar */
.titlebar { background: #fff; display: grid; grid-template-columns: 53px 834px 1fr 121px; align-items: center; padding-bottom: 3px; }
.quick { grid-column: 2; display: flex; align-items: center; gap: 7px; margin-right: 3px; }
.quick svg:last-child { margin-left: -3px; }
.win-title { font-weight: 600; color: #000; font-size: 10.900px; }
.menu-orb { position: absolute; left: 2px; top: 2px; width: 41px; height: 41px; border-radius: 50%; background: #f4f4f4; border: 1px solid #ddd; display: flex; align-items: center; justify-content: center; padding-bottom: 2px; }

/* ribbon tabs */
.tabs { display: flex; border-top: 1px solid #e2e2e2; border-bottom: 1px solid #dedede; align-items: stretch; line-height: 21px; color: #3a3a3a; }
.tab { flex: none; font-size: 11.200px; }
.t-pm { margin-left: 62px; width: 123px; }
.tab.active { width: 80px; text-align: center; margin-top: 2px; line-height: 17px; height: 20px; border: 1px solid #dedede; border-bottom: 0; border-radius: 3px 3px 0 0; background: #f4f4f4; }
.t-te { margin-left: 16px; width: 66px; }
.t-di { width: 91px; }
.t-ne { width: 125px; }
.t-ai { width: 41px; }
.tab-right { margin-left: auto; display: flex; align-items: center; width: 317px; line-height: 20px; color: #1a1a1a; }
.mc { width: 93px; } .cu { width: 106px; } .la { width: 65px; } .he { margin-left: 6px; width: 32px; }

/* ribbon */
.ribbon { display: flex; padding: 1px 0 2px 3px; border-bottom: 2px solid #bdbdbd; border-right: 2px solid #bdbdbd; margin-bottom: 1px; }
.group { display: flex; flex: none; height: 87px; border: 1px solid #dfdfdf; box-shadow: inset 0 0 0 1px #fff; padding-top: 5px; position: relative; align-items: flex-start; }
.g1 { width: 269px; padding-left: 4px; margin-right: 3px; }
.g2 { width: 369px; padding-left: 1px; margin-right: 3px; }
.g3 { width: 507px; padding-left: 3px; margin-right: 3px; }
.g4 { width: 431px; padding-left: 3px; }
.btn { flex: none; width: 65px; display: flex; flex-direction: column; align-items: center; text-align: center; color: #3a3a3a; }
.btn svg { margin: 0 0 5px; }
.btn > .tri { margin-top: 4px; }
.btn span .tri { margin-left: 2px; vertical-align: 2px; }
.btn.off { color: #888; }
.g1 .btn { width: 64.800px; }
.g2 .btn { width: 67.500px; }
.g2 .b72 { width: 76px; }
.g2 .b80 { width: 82px; }
.g3 .b108 { width: 109px; }
.quickstart { margin-left: 225px; }
.vsep { width: 1px; height: 70px; background: #ddd; margin: 3px 3px 0 1px; }
.caption { position: absolute; left: 0; right: 0; bottom: 1px; text-align: center; color: #3a3a3a; }
.cap4 { right: auto; width: 203px; text-align: right; left: 0; padding-right: 77px; }

.conn { background: #efefef; display: flex; align-items: center; font-size: 11.400px; color: #555a5e; border-bottom: 1px solid #e8e8e8; }
.conn b { margin-left: 10px; width: 93px; }
.conn .bar { width: 14px; }

/* work area */
.work { display: grid; grid-template-columns: 382px 261px 1277px; min-height: 0; }
.props { display: flex; flex-direction: column; min-width: 0; }
.cap { display: flex; justify-content: space-between; align-items: center; height: 20px; padding: 0 6px 2px 4px; color: #3a3a3a; flex: none; }
.filter { display: flex; justify-content: space-between; align-items: center; height: 20px; background: #fff; border-bottom: 1px solid #666; padding: 0 2px 1px 1px; flex: none; }
.docked { padding-right: 4px; }
.sheet { display: flex; height: 686px; }
.rows { flex: 1; display: flex; flex-direction: column; color: #1a1a1a; }
.ph { height: 19px; line-height: 18px; font-weight: 600; color: #3a3a3a; padding-left: 23px; position: relative; }
.ph::before { content: ""; position: absolute; left: 5px; top: 4px; width: 9px; height: 9px; border: 1px solid #444; background: linear-gradient(#444, #444) center / 5px 1px no-repeat; }
.pr { height: 18px; margin: 0 18px 1px 19px; display: grid; grid-template-columns: 170px 1fr; column-gap: 1px; line-height: 16px; }
.pr > span { background: #fff; padding: 0 0 2px 4px; display: flex; align-items: center; overflow: hidden; }
.nest { padding-left: 19px; }
.nest .pr { grid-template-columns: 151px 1fr; }
.pr.dim { color: #858585; }
.pr.link span:last-child { color: #2a86f0; }
.swatch { width: 16px; height: 16px; border: 1px solid #000; background: #69c350; margin: 1px 5px 0 -2px; flex: none; }
.pr.chk > span:first-child { padding-left: 2px; }
.box { width: 14px; height: 13px; border-left: 1px solid #333; border-top: 1px solid #333; margin-right: 7px; position: relative; flex: none; }
.box.on::after { content: ""; position: absolute; left: 4px; top: 3px; width: 7px; height: 3px; border-left: 1.500px solid #333; border-bottom: 1.500px solid #333; transform: rotate(-48deg); }
.blank { flex: 1; background: linear-gradient(#eee, #eee) 189px 0 / 1px 100% no-repeat #fff; }
.vscroll { width: 16px; background: #f0f0f0; display: flex; flex-direction: column; align-items: center; justify-content: space-between; padding: 6px 0; flex: none; }
.vscroll .thumb { width: 15px; background: #cdcdcd; }
.docked .vscroll { margin-right: 1px; }
.docked .vscroll .thumb { height: 616px; margin: -34px 0 0; }
.docked .rows { flex: none; width: 361px; }
.desc { border: 1px solid #dcdcdc; margin: 3px 1px 0; height: 118px; padding: 3px 2px; white-space: normal; line-height: 15px; }
.desc b { font-weight: 600; display: block; line-height: 14px; }
.desc p { margin: 2px 0; }
.desc a { color: #e6344a; text-decoration: underline; }

.float { position: absolute; left: 1295px; top: 0; width: 257px; height: 1040px; background: #f4f4f4; border-right: 2px solid #333; border-bottom: 2px solid #444; border-left: 2px solid #fafafa; }
.float .cap { height: 27px; padding: 5px 6px 0 4px; }
.float .filter { margin: 0 1px 0 1px; padding-left: 2px; }
.float .sheet { height: 867px; }
.float .rows { padding-left: 2px; }
.float .pr { grid-template-columns: 105px 1fr; margin-right: 19px; }
.float .nest .pr { grid-template-columns: 86px 1fr; }
.float .blank { background-position: 124px 0; margin-right: 2px; }
.float .ph { line-height: 17px; }
.float .desc { margin: 3px 3px 0 2px; padding-left: 3px; }

/* periphery */
.peri { display: flex; flex-direction: column; padding-right: 4px; }
.peri .cap { padding-left: 4px; padding-right: 5px; }
.peri-box { margin-left: 1px; height: 805px; border: 1px solid #ddd; border-bottom: 1px solid #333; padding: 0 1px; background: #fff; color: #111; }
.peri-box .filter { padding-right: 3px; }
.form { height: 87px; border-bottom: 1px solid #555; display: flex; flex-direction: column; padding: 4px 0 0 1px; font-size: 11.500px; }
.fr { display: flex; align-items: center; height: 19px; }
.fr label { width: 65px; flex: none; }
.sel { width: 184px; height: 19px; border: 1px solid #777; display: flex; justify-content: space-between; align-items: center; padding: 0 4px 2px 6px; flex: none; }
.preset { height: 21px; margin-top: 2px; }
.preset label { width: 67px; font-size: 10.900px; margin-left: -1px; }
.preset .sel { height: 21px; width: 183px; padding-bottom: 0; }
.auto { margin-top: 1px; gap: 3px; height: 20px; padding-left: 1px; font-size: 11.300px; }
.cb { width: 13px; height: 13px; border: 1px solid #333; }
.tree-wrap { display: flex; height: 679px; }
.tree { width: 234px; flex: none; overflow: hidden; position: relative; padding-top: 2px; font-size: 13.500px; }
.lines { position: absolute; left: 0; top: 2px; }
.lines path { fill: none; stroke: #777; stroke-dasharray: 1 1; }
.n { height: 22px; display: flex; align-items: center; position: relative; line-height: 20px; }
.n svg { margin-right: 5px; flex: none; }
.n em { color: #808080; margin-left: 5px; }
.n svg text { font: 700 6.500px "Liberation Sans", sans-serif; fill: #fff; text-anchor: middle; }
.l1 { padding-left: 60px; } .l2 { padding-left: 80px; } .l3 { padding-left: 100px; } .l4 { padding-left: 120px; }
.n::before { content: ""; position: absolute; top: 11px; width: 11px; border-top: 1px dotted #777; }
.l1::before { left: 47px; } .l2::before { left: 67px; } .l3::before { left: 87px; } .l4::before { left: 107px; }
.p::after, .m::after { content: ""; position: absolute; top: 7px; width: 9px; height: 9px; border: 1px solid #777; background: linear-gradient(#000, #000) center / 5px 1px no-repeat, linear-gradient(#000, #000) center / 1px 5px no-repeat, #fff; }
.m::after { background: linear-gradient(#000, #000) center / 5px 1px no-repeat, #fff; }
.l1::after { left: 43px; } .l2::after { left: 63px; } .l3::after { left: 83px; } .l4::after { left: 103px; }
.minus { width: 16px; height: 16px; background: linear-gradient(#fff, #fff) center / 10px 2px no-repeat #666; margin-left: 2px; flex: none; }
.tv .thumb { height: 316px; margin-top: 326px; }
.hscroll { display: flex; align-items: center; justify-content: space-between; height: 15px; background: #f0f0f0; padding: 0 6px; }
.hscroll .thumb { height: 15px; background: #cdcdcd; }
.peri .hscroll { width: 234px; padding-left: 5px; }
.peri .hscroll .thumb { width: 113px; margin-right: 87px; }
.ptabs { display: flex; padding-left: 1px; height: 22px; }
.ptabs span { flex: none; width: 62.300px; border: 1px solid #333; border-top: 0; border-left-width: 0; border-radius: 0 0 3px 3px; display: flex; align-items: center; gap: 1px; padding: 0 0 1px 3px; color: #3a3a3a; font-size: 11px; }
.ptabs span.on { color: #111; border-left-width: 1px; }

/* document */
.doc { display: flex; flex-direction: column; border-top: 1px solid #e0e0e0; border-left: 1px solid #e0e0e0; padding-right: 1px; }
.doctabs { height: 20px; display: flex; justify-content: space-between; align-items: flex-end; padding: 0 2px 0 15px; }
.doctab { width: 131px; height: 18px; background: #c6d4f1; clip-path: polygon(13px 0, 100% 0, 100% 100%, 0 100%, 0 16px); font-weight: 600; color: #222; font-size: 10.600px; padding: 0 4px 2px 19px; display: flex; align-items: center; justify-content: space-between; }
.doctab svg { margin-top: 2px; }
.dd { width: 15px; height: 15px; border-right: 1px solid #333; border-bottom: 1px solid #333; display: flex; align-items: center; justify-content: center; margin-bottom: 3px; }
.frame { border: 2px solid #c6d4f1; border-top-width: 1px; height: 827px; display: flex; flex-direction: column; }
.canvas-row { display: flex; height: 804px; flex: none; border-left: 2px solid #444; border-top: 2px solid #444; border-bottom: 1px solid #333; }
.canvas { flex: 1; background: #fff; position: relative; overflow: hidden; border-left: 1px solid #aaa; border-top: 2px solid #888; font-family: "Liberation Sans", Arial, sans-serif; }
.wires { position: absolute; left: 0; top: 0; }
.cv { width: 17px; padding-bottom: 7px; margin-right: 1px; }
.cv .thumb { height: 533px; margin-top: -194px; }
.hint { position: absolute; right: 0; top: 0; width: 110px; height: 47px; background: #efefef; padding: 3px 0 0 3px; display: flex; flex-direction: column; font-size: 10.400px; color: #000; }
.hint b { font-size: 11.900px; line-height: 15px; }

.pill { position: absolute; left: 262px; width: 143px; height: 13px; border: 1px solid #333; border-radius: 7px 0 0 7px; display: flex; align-items: center; background: #fff; color: #333; }
.p1 { top: 347px; } .p2 { top: 590px; }
.pn { background: #eee; width: 95px; height: 11px; line-height: 11px; font-size: 8.900px; padding-left: 7px; letter-spacing: -.4px; }
.pn.big { font-weight: 700; font-size: 11px; letter-spacing: 0; }
.pv { flex: 1; border-left: 1px solid #333; text-align: center; font-weight: 700; font-size: 11px; line-height: 11px; }
.node { position: absolute; left: 467px; width: 180px; border: 1px solid #69c350; background: #fff; font-size: 11px; letter-spacing: .1px; color: #000; }
.door { top: 212px; height: 84px; } .access { top: 314px; height: 72px; } .light { top: 398px; height: 122px; } .burglar { top: 532px; height: 111px; border-color: #e6344a; }
.nh { background: #69c350; margin: -1px -1px 0; height: 20px; color: #fff; font-weight: 700; font-size: 11px; padding: 0 3px 0 5px; display: flex; justify-content: space-between; align-items: center; }
.nh span { display: flex; gap: 2px; }
.burglar .nh { background: #e6344a; }
.ns { background: #eee; height: 13px; text-align: center; color: #444; line-height: 13px; }
.access .ns { background: #fff; }
.np { height: 12.900px; position: relative; display: flex; justify-content: space-between; align-items: center; padding: 0 8px 0 7px; line-height: 13px; }
.np em { position: absolute; left: 0; right: 0; text-align: center; color: #888; }
.np > span > svg { margin: 0 -2px 0 -1px; }
.port { position: absolute; left: -7px; top: 3px; width: 7px; height: 8px; fill: #f5b04f; }
.port.idle { fill: #d4d4cc; }
.sel-row { background: #b9daff; }
.aoc > span:nth-of-type(1) { color: #f00; }
.aoc .port { fill: #00a0d0; }
.ring { position: absolute; left: -2px; top: 4px; width: 5px; height: 5px; border: 1.500px solid #222; border-radius: 50%; background: #fff; }
.nf { background: #ccc; height: 13px; line-height: 13px; color: #444; padding: 0 5px 0 7px; display: flex; justify-content: space-between; align-items: center; }
.nf.ok { background: #d9efd2; }

.sheetbar { display: flex; height: 19px; align-items: flex-start; background: #f4f4f4; padding-left: 1px; }
.nav { display: flex; gap: 3px; padding-top: 1px; }
.nav i { width: 13px; height: 16px; border-right: 1px solid #333; border-bottom: 1px solid #333; }
.nav svg { width: 12px; height: 14px; }
.sheets { margin-left: 6px; }
.sheets text { fill: #333; font-size: 11.300px; }
.sheets .b { font-weight: 700; fill: #000; }
.ch { margin-left: auto; margin-right: 19px; width: 166px; height: 16px; border-left: 1px solid #333; padding-left: 9px; }
.ch .thumb { width: 99px; margin-right: 24px; }

/* status tools */
.tools { display: flex; padding-left: 4px; color: #3a3a3a; font-size: 11px; }
.tools span { border: 1px solid #ddd; border-bottom: 0; border-left-color: #e2e2e2; display: flex; align-items: center; padding-left: 4px; gap: 11px; height: 20px; }
.w70 { width: 69px; } .w73 { width: 74px; } .w69 { width: 68px; } .w87 { width: 87px; } .w82 { width: 82px; } .w62 { width: 62px; }
.gap { margin-left: 14px; }

/* taskbar */
.taskbar { background: linear-gradient(90deg, #20363f 0, #20353f 50%, #1b2a42 75%, #192541 100%); display: flex; color: #fff; }
.start { width: 48px; display: flex; align-items: center; justify-content: center; }
.search { width: 288px; background: #f1f1f1; border: 1px solid #bbb; color: #333; font-size: 14px; display: flex; align-items: center; gap: 11px; padding-left: 11px; }
.apps { display: flex; }
.app { width: 49px; display: flex; align-items: center; justify-content: center; }
.app.run { width: 41px; margin: 0 4px 0 5px; border-bottom: 2px solid #76b9ed; padding-top: 2px; }
.app.run.cur { width: 48px; margin: 0 0 0 1px; background: #4d6068; }
.cfg { font: 700 5.500px "Liberation Sans", sans-serif; fill: #fff; text-anchor: middle; }
.tray { margin-left: auto; width: 323px; display: flex; align-items: center; }
.t2 { margin-left: 26px; } .t3 { margin-left: 12px; } .t4 { margin-left: 10px; } .t5 { margin-left: 9px; } .t6 { margin-left: 9px; }
.lang { margin-left: 9px; width: 28px; font-size: 11px; }
.clock { width: 76px; display: flex; flex-direction: column; align-items: center; line-height: 18px; font-size: 10.900px; letter-spacing: -.1px; }
.t7 { margin-left: 6px; margin-top: 6px; }
.cnt { font-size: 11px; font-weight: 600; fill: #fff; text-anchor: middle; }
```
